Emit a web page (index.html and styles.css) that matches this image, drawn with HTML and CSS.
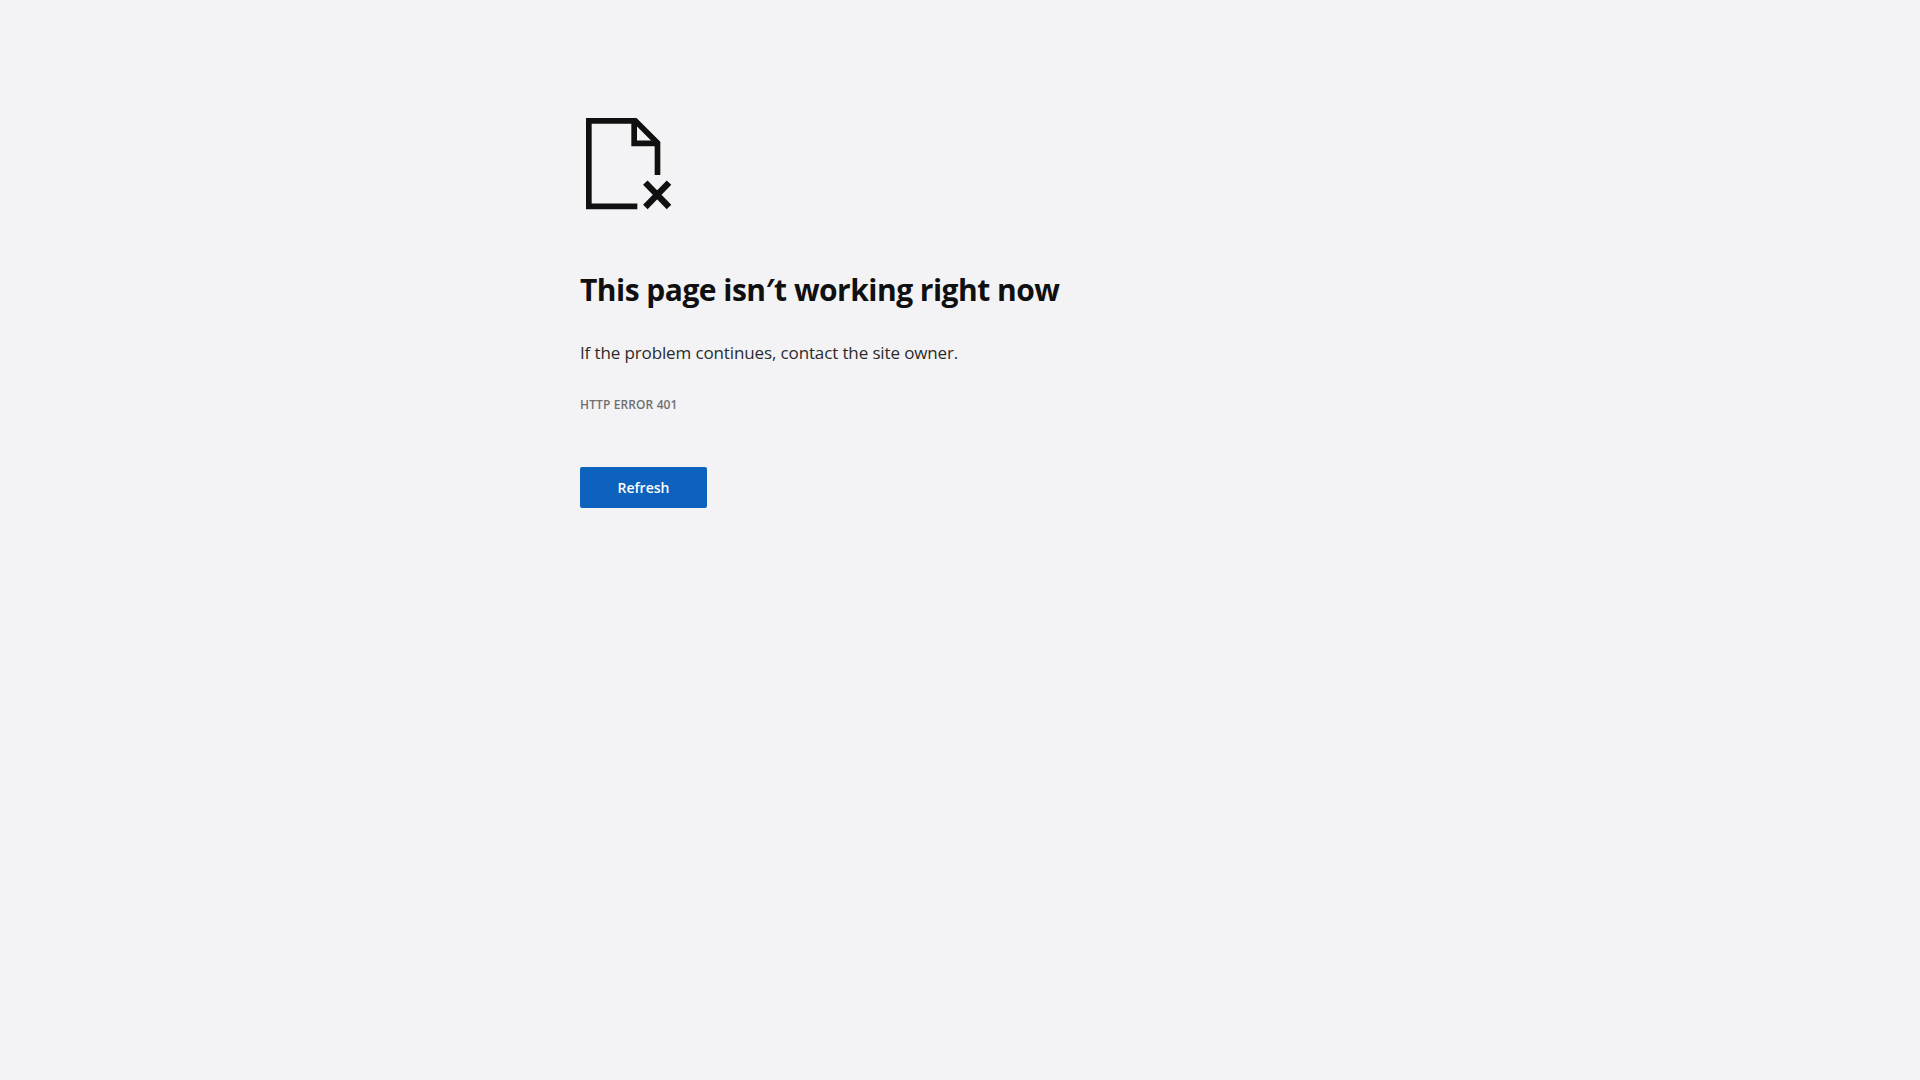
FILE: index.html
```html
<!DOCTYPE html>
<html lang="en">
<head>
<meta charset="utf-8">
<title>This page isn’t working right now</title>
<link rel="stylesheet" href="styles.css">
</head>
<body>
<main class="error-page">
  <svg class="error-icon" viewBox="30 0 330 360" fill="none" stroke="#101011" stroke-width="17" aria-hidden="true">
    <path d="M202 319H56.500V62.500H196L262.500 129V225"/>
    <path d="M192.500 62.500V130H262"/>
    <path d="M226 248L297 321M297 248L226 321" stroke-width="19"/>
  </svg>
  <h1 class="title">This page isn′t working right now</h1>
  <p class="message">If the problem continues, contact the site owner.</p>
  <p class="code">HTTP ERROR 401</p>
  <button class="refresh" type="button">Refresh</button>
</main>
</body>
</html>
```
FILE: styles.css
```css
body {
  margin: 0;
  background: #f3f3f5;
  color: #101011;
  font-family: "Open Sans", "Noto Sans", sans-serif;
}

.error-page {
  display: flex;
  flex-direction: column;
  align-items: flex-start;
  padding: 100px 0 0 580px;
}

.error-icon {
  width: 110px;
  height: 120px;
}

.title {
  margin: 50px 0 0;
  font-size: 30px;
  line-height: 40px;
  font-weight: 700;
  letter-spacing: -0.52px;
  white-space: nowrap;
}

.message {
  margin: 30px 0 0;
  font-size: 17px;
  line-height: 26px;
  letter-spacing: -0.125px;
  color: #2b2b2d;
}

.code {
  margin: 30px 0 0;
  font-size: 12px;
  line-height: 18px;
  font-weight: 600;
  letter-spacing: 0.12px;
  color: #707072;
}

.refresh {
  width: 127px;
  height: 41px;
  margin-top: 53px;
  padding: 1px 0 0;
  border: 0;
  border-radius: 2px;
  background: #0d62bd;
  color: #fff;
  font: 600 14px/40px "Open Sans", "Noto Sans", sans-serif;
}
```
